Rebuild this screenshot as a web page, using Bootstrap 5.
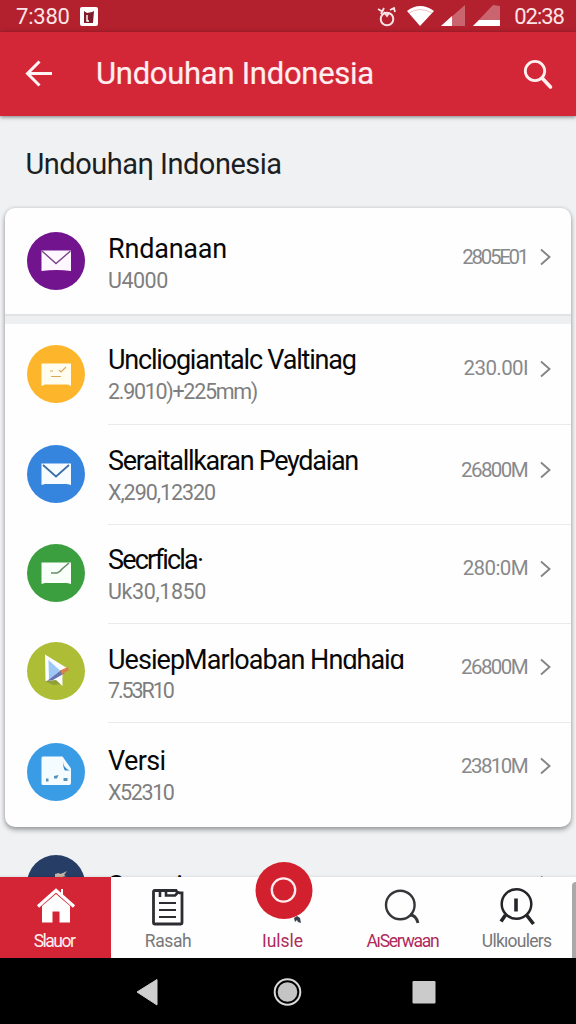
<!DOCTYPE html>
<html lang="id">
<head>
<meta charset="utf-8">
<meta name="viewport" content="width=device-width, initial-scale=1">
<title>Undouhan Indonesia</title>
<link href="https://cdn.jsdelivr.net/npm/bootstrap@5.3.0/dist/css/bootstrap.min.css" rel="stylesheet">
<style>
body{font-family:Roboto,"Liberation Sans",sans-serif;background:#f0f1f3;height:1024px;overflow:hidden;color:#111}
.status{height:32px;background:#b3202e;color:#fbe4e6;font-size:22px;line-height:31px}
.status .time{letter-spacing:-.2px}
.status .notif{margin-left:9px}
.status .clock{letter-spacing:-1px;margin-left:12px;margin-right:12px}
.appbar{height:84px;background:#d32738;box-shadow:0 1px 4px rgba(0,0,0,.5);z-index:2}
.appbar h1{font-size:31px;line-height:36px;font-weight:400;color:#ffeff0;letter-spacing:-.28px;margin-left:42px;-webkit-text-stroke:.2px}
.appbar .back{margin-left:24px}
.appbar .find{margin-right:22px}
main{min-height:0}
.section-title{font-size:29px;line-height:34px;font-weight:400;color:#1b1e22;padding:31px 0 0 25.5px;height:92px;letter-spacing:-.5px}
.panel{margin:0 5px;height:619px;border-radius:10px;background:#fefefe;box-shadow:0 3px 5px rgba(0,0,0,.32),0 0 4px rgba(0,0,0,.14);overflow:hidden}
.entry{display:grid;grid-template-columns:58px 1fr auto 11px;padding-left:22px;padding-right:20px;align-items:start}
.r1{height:106px;padding-top:24px}
.r2,.r3{height:100px;padding-top:21px}
.r4{height:99px;padding-top:19.5px}
.r5{height:99px;padding-top:19px}
.r6{height:105px;padding-top:21px}
.peek{margin:0 5px;padding-top:28px}
.disc{width:58px;height:58px;border-radius:50%}
.disc svg{display:block}
.texts{padding-left:23px;padding-top:1px;white-space:nowrap}
.name{font-size:27px;line-height:32px;color:#080809}
.sub{font-size:21.5px;line-height:32px;color:#7e7e80}
.val{font-size:20.5px;line-height:24px;color:#88898b;margin-top:13px;margin-right:13px;white-space:nowrap;letter-spacing:-1.6px}
.entry .chev{margin-top:16px}
.r1 .name{letter-spacing:-.2px}
.r1 .sub{letter-spacing:-.5px}
.r1 .val{letter-spacing:-2.3px}
.r2 .texts{padding-top:0}
.r2 .name{letter-spacing:-1.2px;margin-top:-1px}
.r2 .sub{letter-spacing:-1.3px}
.r2 .val{letter-spacing:-.6px;margin-top:11px;margin-right:12px}
.r2 .chev,.r6 .chev{margin-top:15px}
.r3 .texts{padding-top:0}
.r3 .name{letter-spacing:-1.3px}
.r3 .sub{letter-spacing:-1.05px}
.r4 .name{letter-spacing:-1.8px}
.r4 .sub{letter-spacing:-.4px}
.r4 .texts{padding-top:0}
.r4 .val{letter-spacing:-.6px;margin-right:12px;margin-top:12px}
.r5 .texts{padding-top:2px}
.r5 .name{letter-spacing:-.95px}
.r5 .sub{letter-spacing:-2.1px;margin-top:-1px}
.r6 .texts{padding-top:2px}
.r6 .name{letter-spacing:-.6px}
.r6 .sub{letter-spacing:-1.4px}
.r6 .val{margin-top:11px}
.r6 .chev{margin-top:14px}
.peek .texts{padding-top:15px}
.peek .chev{margin-top:20px}
.rule{position:relative}
.rule::after{content:"";display:block;height:1px;background:#e9eaeb;position:absolute;left:103px;right:0;bottom:-1px}
.band{height:10px;background:#eeeff0;border-top:2px solid #e2e3e4}
.tabs{height:81px;display:grid;grid-template-columns:111px 113px 120px 117px 111px 4px;background:#fefefe;box-shadow:0 -1px 2px rgba(0,0,0,.08);z-index:3}
.tab{font-size:17.5px;line-height:20px;color:#77777a;padding-top:9px;white-space:nowrap}
.tab svg{display:block;margin-bottom:3px}
.tab.on{background:#d32535;color:#fff0f1}
.tab.pink{color:#b02a5c}
.tab.on span{letter-spacing:-1.5px;margin-right:3px}
.t2 span{letter-spacing:-.4px;margin-left:1px}
.t3 span{margin-top:45px;margin-right:3px}
.t4 span{letter-spacing:-1.25px}
.t4 svg{margin-right:2px}
.t5 span{letter-spacing:-.75px}
.fab{position:absolute;top:-16px;left:31px}
.thumb{background:#a9a9aa;margin-top:5px;border-top-left-radius:4px}
.sys{height:66px;background:#000}
</style>
</head>
<body class="d-flex flex-column">
<header class="status d-flex flex-shrink-0 align-items-center">
  <span class="time ps-3">7:380</span>
  <svg class="notif me-auto" width="21" height="21" viewBox="0 0 21 21"><rect x="1" y="1" width="18" height="19" rx="2" fill="#fff"/><path d="M5 5l3 2 5-1 2-1-1 12H5V9z" fill="#7e1d29"/><path d="M8 9v6h2" stroke="#fff" stroke-width="1.4" fill="none"/></svg>
  <svg width="126" height="26" viewBox="377 2 126 26">
    <circle cx="388" cy="18" r="6.3" fill="none" stroke="#fbe4e6" stroke-width="2"/><path d="M379 8l5 3M385 7l-3 6M391 9l4-2 1 4M385 11l3 4 2-3" fill="none" stroke="#fbe4e6" stroke-width="1.8"/>
    <path d="M408 10Q421 0 435 10L421 25z" fill="#fff"/><path d="M410 12Q421 5 433 12" stroke="#e4a5aa" fill="none" stroke-width=".7"/>
    <path d="M442 25L466 4v21z" fill="#ca6570"/><path d="M442 25l11-10v10z" fill="#fff"/>
    <path d="M474 25L494 4l7 1v20z" fill="#ca6570"/><path d="M474 25l6-6h21v6z" fill="#fff"/>
  </svg>
  <span class="clock">02:38</span>
</header>
<div class="appbar d-flex flex-shrink-0 align-items-center position-relative">
  <svg class="back" width="30" height="32" viewBox="24 57 30 32"><path d="M52 72.500H28M39.500 60.500L27.500 72.500l12 12" fill="none" stroke="#fff3f3" stroke-width="3"/></svg>
  <h1 class="mb-0 text-nowrap">Undouhan Indonesia</h1>
  <svg class="find ms-auto" width="32" height="32" viewBox="522 58 32 32"><circle cx="535" cy="71" r="9.700" fill="none" stroke="#fff0f0" stroke-width="2.800"/><path d="M542 78l8.500 9" stroke="#fff0f0" stroke-width="3.600" stroke-linecap="round"/></svg>
</div>
<main class="flex-grow-1 overflow-hidden">
  <h2 class="section-title mb-0">Undouhaη Indonesia</h2>
  <section class="panel">
    <div class="entry r1">
      <div class="disc" style="background:#73148f"><svg width="58" height="58"><path d="M14.500 18.500h29.500V39q-14.500-2-29.500 0z" fill="#fff7ff"/><path d="M15 19l14 12.500L43.500 19" fill="none" stroke="#794687" stroke-width="1.400"/></svg></div>
      <div class="texts"><div class="name">Rndanaan</div><div class="sub">U4000</div></div>
      <div class="val">2805E01</div><svg class="chev" width="11" height="18"><path d="M1 1.500l8.500 7.500L1 16.500" fill="none" stroke="#858585" stroke-width="1.900"/></svg>
    </div>
    <div class="band"></div>
    <div class="entry rule r2">
      <div class="disc" style="background:#fdb62c"><svg width="58" height="58"><path d="M14.500 18.500h29.500V41l-3-1.500H18L14.500 41z" fill="#fffdf0"/><path d="M23 26h3M32 25l2 2 5-5M24 31.500h10" fill="none" stroke="#dda75c" stroke-width="1.200"/></svg></div>
      <div class="texts"><div class="name">Uncliogiantalc Valtinag</div><div class="sub">2.9010)+225mm)</div></div>
      <div class="val">230.00I</div><svg class="chev" width="11" height="18"><path d="M1 1.500l8.500 7.500L1 16.500" fill="none" stroke="#858585" stroke-width="1.900"/></svg>
    </div>
    <div class="entry rule r3">
      <div class="disc" style="background:#3585df"><svg width="58" height="58"><path d="M14.500 18.500h29.500V40l-4-1H18l-3.500 1z" fill="#f7fcff"/><path d="M16 20l13 11.500L42 20" fill="none" stroke="#3a6fa9" stroke-width="1.700"/></svg></div>
      <div class="texts"><div class="name">Seraitallkaran Peydaian</div><div class="sub">X,290,12320</div></div>
      <div class="val">26800M</div><svg class="chev" width="11" height="18"><path d="M1 1.500l8.500 7.500L1 16.500" fill="none" stroke="#858585" stroke-width="1.900"/></svg>
    </div>
    <div class="entry rule r4">
      <div class="disc" style="background:#3b9f40"><svg width="58" height="58"><path d="M14.500 18.500h29.500V40l-4-1H18l-3.500 1z" fill="#f9fff9"/><path d="M24 29h6q3-1 5-4l7-6" fill="none" stroke="#668c69" stroke-width="1.500"/></svg></div>
      <div class="texts"><div class="name">Secrficla·</div><div class="sub">Uk30,1850</div></div>
      <div class="val">280:0M</div><svg class="chev" width="11" height="18"><path d="M1 1.500l8.500 7.500L1 16.500" fill="none" stroke="#858585" stroke-width="1.900"/></svg>
    </div>
    <div class="entry rule r5">
      <div class="disc" style="background:#aebd36"><svg width="58" height="58"><path d="M18 39l8 4 9-1 1-6z" fill="#718238" opacity=".5"/><path d="M18 12.500l23.500 14.500-6 5.500v11.500l-6.500-6-10.500 1z" fill="#fbfdff"/><path d="M21.500 18l11.500 10.500-11 9z" fill="#9bc8f5"/><path d="M20 39l14-11 4 3-12 7z" fill="#6676b0"/><path d="M33 28.500l8-3.500 1 3-7 4.500z" fill="#d98048"/></svg></div>
      <div class="texts"><div class="name">UesiepMarloaban Hnɑhaiɑ</div><div class="sub">7.53R10</div></div>
      <div class="val">26800M</div><svg class="chev" width="11" height="18"><path d="M1 1.500l8.500 7.500L1 16.500" fill="none" stroke="#858585" stroke-width="1.900"/></svg>
    </div>
    <div class="entry r6">
      <div class="disc" style="background:#3b9ce6"><svg width="58" height="58"><path d="M16 13.500h19.500l8.500 12v14.500q0 2-2 2H16q-1.500 0-1.500-1.500V15q0-1.500 1.500-1.500z" fill="#f5fcff"/><path d="M36 17.500q0 8 7 10l-5 0q-2-2-2-10z" fill="#348bd0"/><path d="M19 35.500h2.500v3H19zM27 33l4.500-1-1.500 3.500h-3zM36.500 35h4v3h-4z" fill="#5790b7"/></svg></div>
      <div class="texts"><div class="name">Versi</div><div class="sub">X52310</div></div>
      <div class="val">23810M</div><svg class="chev" width="11" height="18"><path d="M1 1.500l8.500 7.500L1 16.500" fill="none" stroke="#858585" stroke-width="1.900"/></svg>
    </div>
  </section>
  <div class="entry peek">
    <div class="disc" style="background:#263d66"><svg width="58" height="58"><path d="M28 19l4-1 1 1 3-1 4-2-3 4 2 1-11 3z" fill="#c5b6a5"/></svg></div>
    <div class="texts"><div class="name">Samsi</div></div>
    <div></div><svg class="chev" width="11" height="18"><path d="M1 1.500l8.500 7.500L1 16.500" fill="none" stroke="#858585" stroke-width="1.900"/></svg>
  </div>
</main>
<nav class="tabs flex-shrink-0 position-relative">
  <div class="tab on d-flex flex-column align-items-center"><svg width="40" height="42" viewBox="35 887 40 42"><path d="M37 907.500L55 891.500l18 16" fill="none" stroke="#fff" stroke-width="3.200"/><path d="M60 890h2v8h-2z" fill="#fff"/><path d="M41 907l14-12 14 12v16.500H58.500v-11h-7v11H41z" fill="#fff"/></svg><span>Slauor</span></div>
  <div class="tab t2 d-flex flex-column align-items-center"><svg width="36" height="42" viewBox="150 886 36 42"><path d="M155 890.500h21q1 2.500 6 2.500v30q0 1-1 1H155q-1.500 0-1.500-1.500v-30.500q0-1.500 1.500-1.500z" fill="none" stroke="#2c2d30" stroke-width="2.800"/><path d="M160 890v7M166 890v5.500h9l3-3" fill="none" stroke="#2c2d30" stroke-width="2.600"/><path d="M159 903h17M159 910h17M159 917h17" stroke="#2c2d30" stroke-width="2"/></svg><span>Rasah</span></div>
  <div class="tab t3 pink d-flex flex-column align-items-center position-relative">
    <svg class="fab" width="70" height="64" viewBox="255 860 70 64"><path d="M294 917l3-2 3 2 1 5-3-1-1-2-2 2z" fill="#39404e"/><circle cx="284" cy="889.500" r="28.500" fill="#d3202e"/><circle cx="283.500" cy="889" r="11.700" fill="none" stroke="#ffecee" stroke-width="2.300"/></svg>
    <span>Iulsle</span></div>
  <div class="tab t4 pink d-flex flex-column align-items-center"><svg width="42" height="42" viewBox="380 886 42 42"><circle cx="399.300" cy="905" r="14.300" fill="none" stroke="#353639" stroke-width="2.400"/><path d="M409 915q6 0 8 8" fill="none" stroke="#353639" stroke-width="2.800"/></svg><span>AıSerwaan</span></div>
  <div class="tab t5 d-flex flex-column align-items-center"><svg width="42" height="42" viewBox="496 886 42 42"><circle cx="516.500" cy="904" r="14.800" fill="none" stroke="#242528" stroke-width="2.500"/><path d="M516 898.500v13M505.500 915l-4.500 6.500M526.500 915l7 9" fill="none" stroke="#242528" stroke-width="3.600"/></svg><span>Ulkıoulers</span></div>
  <div class="thumb"></div>
</nav>
<footer class="sys flex-shrink-0"><svg class="d-block" width="576" height="66" viewBox="0 958 576 66"><path d="M137 992l20-12.500v25.500z" fill="#cfcfcf" stroke="#cfcfcf" stroke-linejoin="round"/><circle cx="287.500" cy="992" r="12.800" fill="#000" stroke="#dadada" stroke-width="2"/><circle cx="287.500" cy="992" r="9.800" fill="#c4c4c4"/><rect x="412.500" y="981" width="23" height="22.500" rx="1" fill="#cbcbcb"/></svg></footer>
<script src="https://cdn.jsdelivr.net/npm/bootstrap@5.3.0/dist/js/bootstrap.bundle.min.js"></script>
</body>
</html>
